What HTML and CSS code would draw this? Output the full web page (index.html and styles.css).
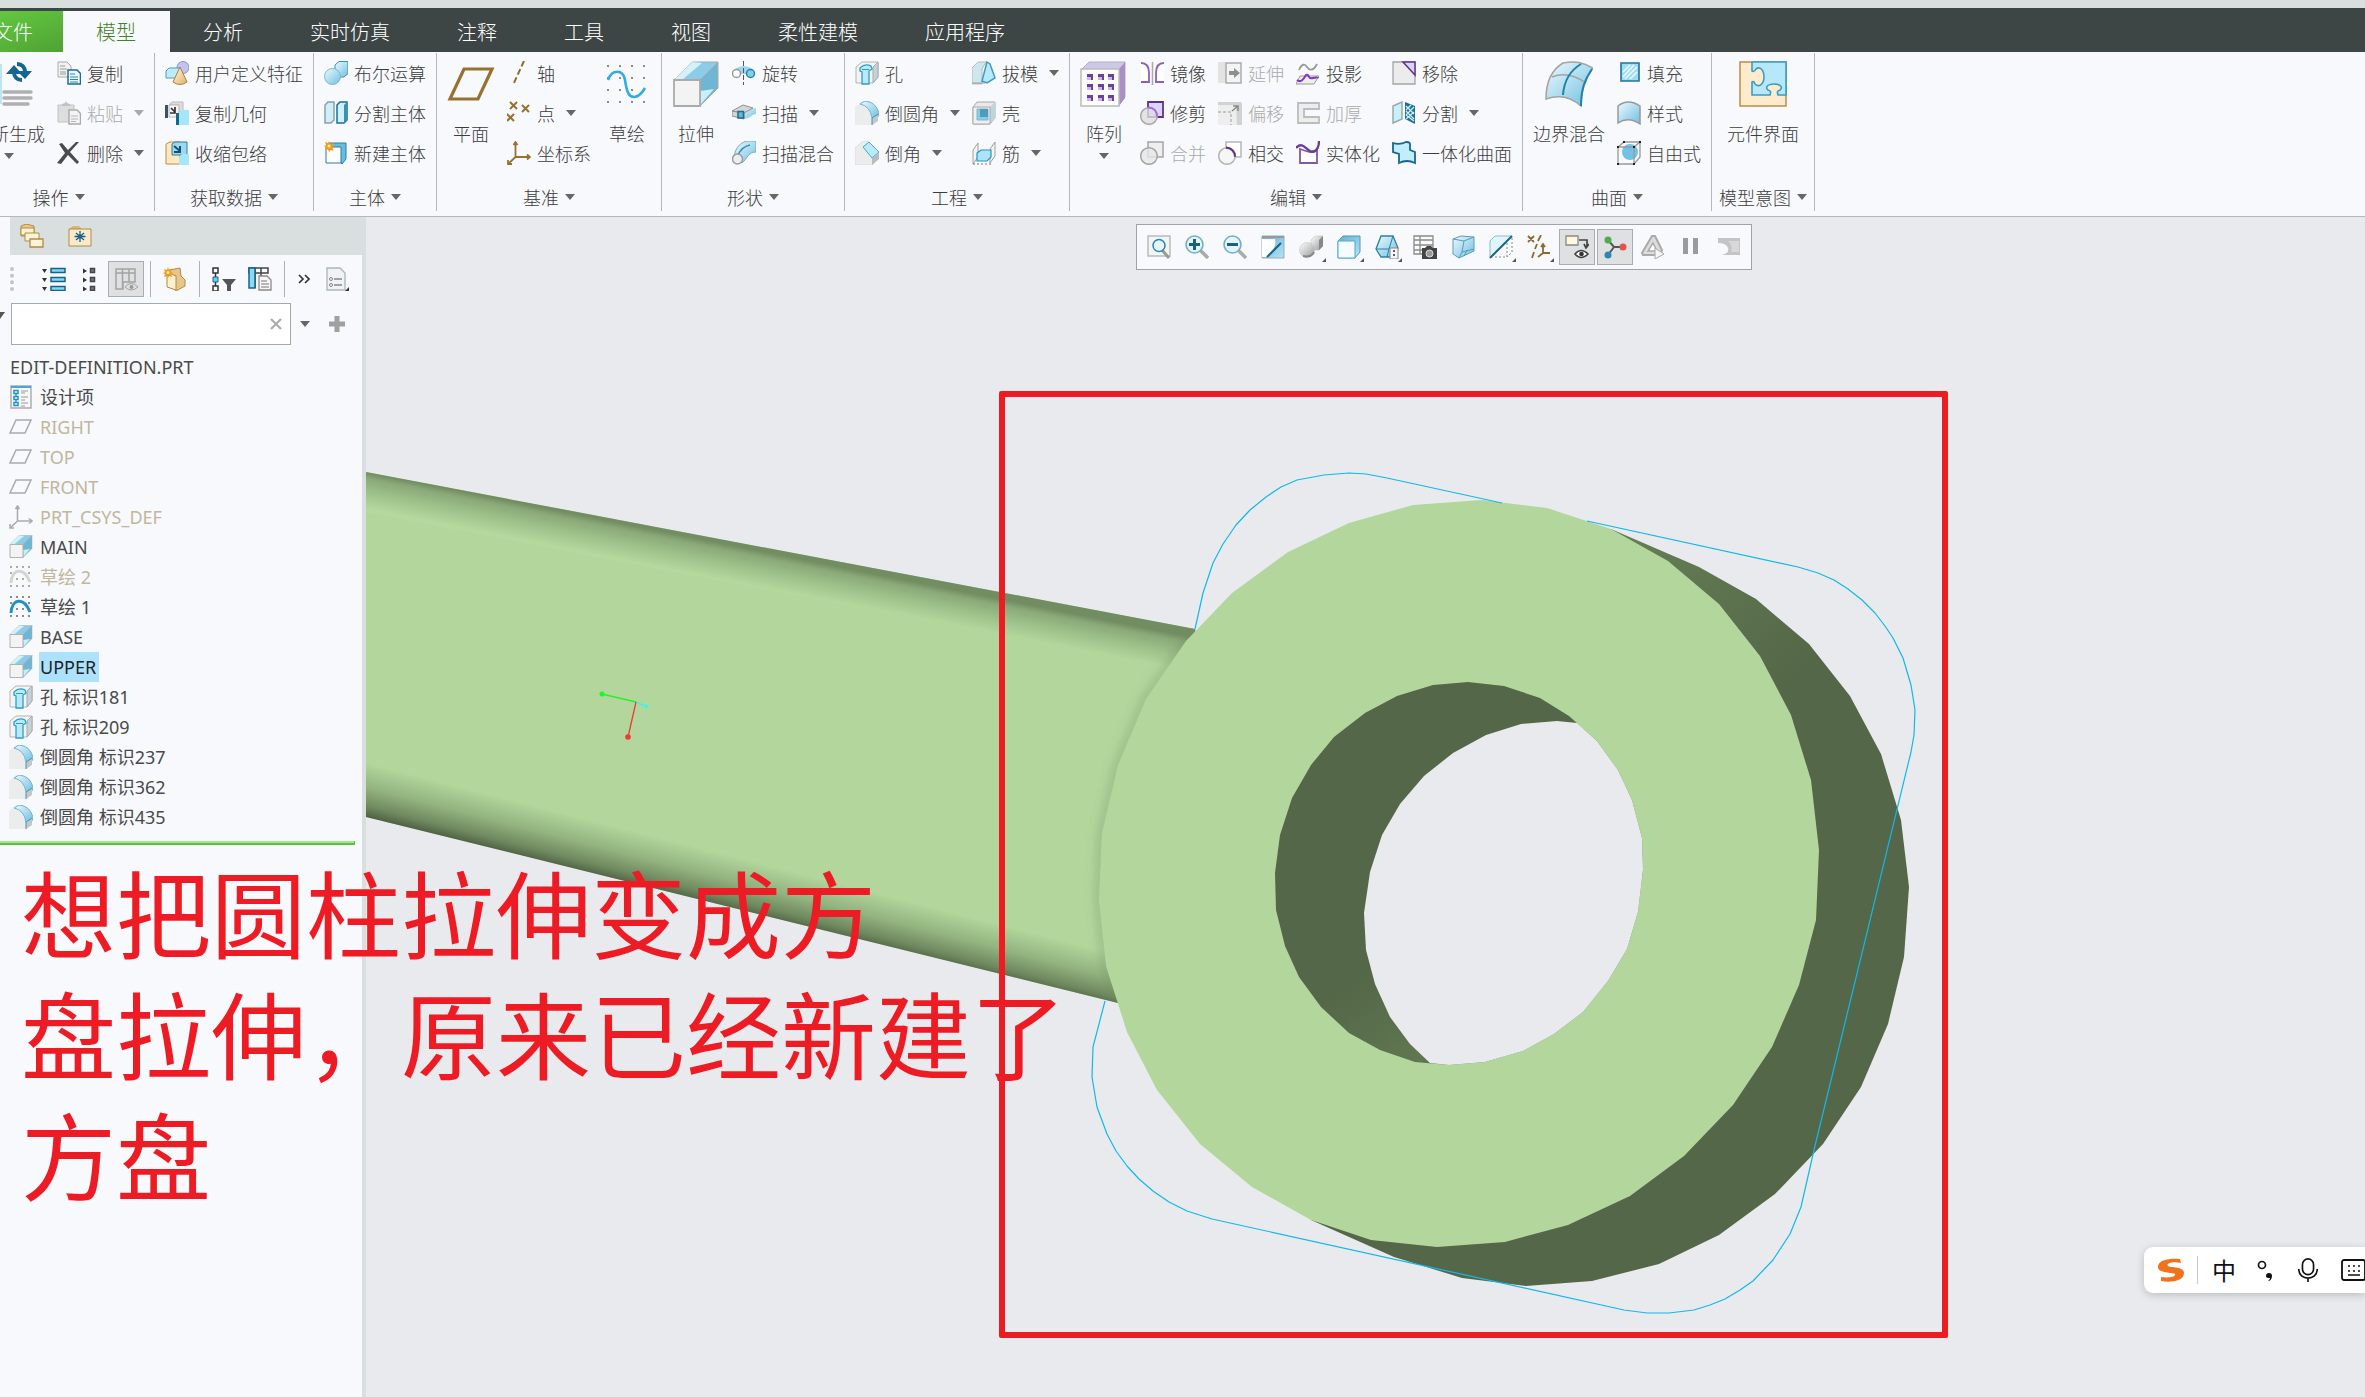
FILE: index.html
```html
<!DOCTYPE html>
<html lang="zh-CN">
<head>
<meta charset="utf-8">
<title>EDIT-DEFINITION.PRT</title>
<link rel="stylesheet" href="styles.css">
</head>
<body>
<svg class="defs" aria-hidden="true">
  <defs>
    <linearGradient id="gb" x1="0" y1="0" x2="1" y2="1"><stop offset="0" stop-color="#eefaff"/><stop offset="1" stop-color="#6fbfe0"/></linearGradient>
    <linearGradient id="gs" x1="0" y1="0" x2="1" y2="1"><stop offset="0" stop-color="#fff"/><stop offset="1" stop-color="#999"/></linearGradient>
    <linearGradient id="gy" x1="0" y1="0" x2="1" y2="1"><stop offset="0" stop-color="#fff8e0"/><stop offset="1" stop-color="#e0b468"/></linearGradient>
    <linearGradient id="gd" x1="0" y1="0" x2="1" y2="1"><stop offset="0" stop-color="#5fb0d4"/><stop offset="1" stop-color="#b5e4f5"/></linearGradient>
  </defs>
  <symbol id="regen" viewBox="0 0 48 48"><path d="M10 3h7v40h-7z" fill="#bfe4f2"/><path d="M29 11c0 5 3 8 8 8M40 11c0-5-3-8-8-8" fill="none" stroke="#15668c" stroke-width="4"/><path d="M21 13l8-9 8 9zM32 10h15l-7 8z" fill="#15668c"/><path d="M19 31h27M19 37h27M19 43h24" stroke="#b0b0b0" stroke-width="3.400" stroke-linecap="round"/></symbol>
  <symbol id="copy" viewBox="0 0 24 24"><path d="M1 1h9l4 4v11H1z" fill="#f1f1f1" stroke="#aaa"/><path d="M3 5h5M3 8h7M3 11h6M3 13h6" stroke="#999"/><path d="M11 9h9l3.500 3.500V23H11z" fill="#eafaff" stroke="#1d6c90" stroke-width="1.500"/><path d="M13 13h5M13 16h8M13 18.500h8M13 21h8" stroke="#2a8ab5"/></symbol>
  <symbol id="paste" viewBox="0 0 24 24"><path d="M1 4h16v17H1z" fill="#ddd" stroke="#c2c2c2"/><path d="M5 5V3l3-1 1-2 1 2 3 1v2z" fill="#c2c2c2"/><path d="M12 9h8l3.500 3.500V23H12z" fill="#f4f4f4" stroke="#aaa" stroke-width="1.500"/><path d="M14 15h7M14 18h7M14 20.500h5" stroke="#b5b5b5"/></symbol>
  <symbol id="del" viewBox="0 0 24 24"><path d="M2 3l3-1 6 7 8-8h3l-9 10 9 10-2 2-9-9-7 9-4-1 8-10z" fill="#4b4b4b"/></symbol>
  <symbol id="udf" viewBox="0 0 24 24"><circle cx="18" cy="6.500" r="6" fill="#c3c3ee" stroke="#8f8fd0"/><path d="M1 10l3-3h11l-2 10H1z" fill="#bfeaf8" stroke="#4aa0c6"/><path d="M15 6l7 15q-7 5-14 0z" fill="url(#gy)" stroke="#a8823f"/></symbol>
  <symbol id="cgeo" viewBox="0 0 24 24"><path d="M0 4h3v13H0z" fill="#3d5261"/><path d="M4 4l3-3h11v10h-4V4z" fill="#ddd" stroke="#bbb"/><path d="M4 4h10v12H4z" fill="#f4f4f4" stroke="#bbb"/><path d="M6 7l4 4m0-5v6H5" stroke="#333" stroke-width="1.700" fill="none"/><path d="M11 12h4v12h-4z" fill="#17678c"/><path d="M14 12l3-3h7v15H14z" fill="#a6e6fb"/></symbol>
  <symbol id="shr" viewBox="0 0 24 24"><path d="M1 3l4-2h10v22H1z" fill="#ffe9bd" stroke="#b58f4c"/><path d="M7 3l3-2h12v13H7z" fill="#9bd9f1" stroke="#2a7ea5"/><path d="M9 5l6 5m0-5v6H9" stroke="#15506f" stroke-width="2" fill="none"/><path d="M14 16l3-3h7v11H14z" fill="#a6e6fb"/></symbol>
  <symbol id="bool" viewBox="0 0 24 24"><path d="M11 4l4-3.500h9v12L20 16h-9z" fill="url(#gb)" stroke="#3a90b8"/><circle cx="8.500" cy="15.500" r="8" fill="url(#gb)" stroke="#7ab8d0"/></symbol>
  <symbol id="splitb" viewBox="0 0 24 24"><path d="M1 4l3-3h6v18l-3 3H1z" fill="#cfeef8" stroke="#8aa0a8" stroke-width="1.500"/><path d="M13 4l3-3h7v18l-3 3h-7z" fill="#cfeffa" stroke="#1b6d93" stroke-width="1.500"/><path d="M20 4l3-3v18l-3 3z" fill="#3a90b8"/></symbol>
  <symbol id="newb" viewBox="0 0 24 24"><path d="M3 6l3-4h16v16l-4 5z" fill="#6cbbdc" stroke="#2a7ea5"/><path d="M2 6h15v16H2z" fill="#fcfeff" stroke="#2a7ea5"/><path d="M5 0l1.500 3 3-1-1 3 2 1-2 1 1 3-3-1L5 11l-1-2.500-3 .5 1-3-2-1 2-1-1-3 3 1z" fill="#f59a1b"/><circle cx="5" cy="5" r="1.500" fill="#fff3b0"/></symbol>
  <symbol id="plane" viewBox="0 0 48 48"><path d="M3 38L17 8h28L31 38z" fill="none" stroke="#96722f" stroke-width="3.200"/></symbol>
  <symbol id="axis" viewBox="0 0 24 24"><path d="M17 0L6 24" stroke="#8c6a2a" stroke-width="2" stroke-dasharray="6 3"/></symbol>
  <symbol id="pts" viewBox="0 0 24 24"><path d="M3 1l7 7M10 1L3 8M15 4l7 7M22 4l-7 7M0 13l7 7M7 13l-7 7" stroke="#96722f" stroke-width="2"/></symbol>
  <symbol id="csys" viewBox="0 0 24 24"><path d="M8.500 1v15H23M8.500 16L1 23M6.500 4l2-3 2 3M20 13.500l3 2.500-3 2.500M1 19v4h4" stroke="#96722f" stroke-width="1.800" fill="none"/></symbol>
  <symbol id="sketch" viewBox="0 0 48 48"><path d="M4 5h2M16 5h2M28 5h2M40 5h2M4 17h2M16 17h2M28 17h2M40 17h2M4 29h2M16 29h2M28 29h2M40 29h2M4 41h2M16 41h2M28 41h2M40 41h2" stroke="#666" stroke-width="1.500"/><path d="M5 19c4-11 15-11 17 0 2 13 4 17 9 17 5 0 8-4 11-9" fill="none" stroke="#33ace0" stroke-width="2.600"/></symbol>
  <symbol id="ext" viewBox="0 0 48 48"><path d="M2 19L20 1h26L28 19z" fill="#8accea" stroke="#aaa"/><path d="M28 19L46 1v26L28 45z" fill="#6fb6d2" stroke="#aaa"/><path d="M28 30l14-2-13 15z" fill="#c9effb"/><path d="M2 19L20 1l10 1-20 17z" fill="#d4f1fa"/><path d="M2 19h26v26H2z" fill="#f3f3f3" stroke="#aaa" stroke-width="1.800"/></symbol>
  <symbol id="rev" viewBox="0 0 24 24"><path d="M3 8q8-6 18 0v5H3z" fill="#9bd6ee"/><circle cx="4.500" cy="12.500" r="4" fill="#fff" stroke="#999" stroke-width="1.500"/><circle cx="18.500" cy="12.500" r="4" fill="#85cdeb" stroke="#2a86b0" stroke-width="1.500"/><path d="M11.500 0v24" stroke="#555" stroke-dasharray="5 2"/></symbol>
  <symbol id="sweep" viewBox="0 0 24 24"><path d="M8 9c6 3 12-3 16-2v6c-4 0-6 5-13 5z" fill="url(#gb)"/><path d="M0 10L11 4l10 3-9 5zM0 10l12 2v6L0 15z" fill="#d5d5d5" stroke="#909090"/><path d="M6 10.500h5.500V17H6z" fill="#6ab6d6" stroke="#1f6d93" stroke-width="1.500"/></symbol>
  <symbol id="swb" viewBox="0 0 24 24"><path d="M2 16C3 6 10 0 17 0h7v11c-8 0-8 6-14 11z" fill="url(#gb)" stroke="#7fa9ba"/><path d="M18 4c-6 1-10 6-12 10" stroke="#3a90b8" stroke-width="1.500" fill="none"/><circle cx="5.500" cy="18" r="5" fill="#eee" stroke="#9d9d9d" stroke-width="1.500"/></symbol>
  <symbol id="hole" viewBox="0 0 24 24"><path d="M1 6l6-5h16v15l-5 6H1z" fill="#f3f3f3" stroke="#b5b5b5"/><path d="M18 6l5-5v15l-5 6z" fill="#c3d3d8" stroke="#aaa"/><path d="M5 7q5-5 11-2l1 3-3 2v13H7V11L5 10z" fill="#b8eafb" stroke="#2e9dcb" stroke-width="1.300"/><path d="M7 8.500h7" stroke="#2e9dcb"/></symbol>
  <symbol id="round" viewBox="0 0 24 24"><path d="M0 6l7-6h7q9 3 10 14l-6 10H0z" fill="#ececec"/><path d="M5 3l5-3q11 1 14 12l-1 4-6 1Q15 5 5 3z" fill="url(#gb)" stroke="#71b6d2"/><path d="M17 17l6-3v6l-6 4z" fill="#c6c6c6"/><path d="M17 24v-7l6-4" stroke="#3c9ac2" fill="none"/></symbol>
  <symbol id="chamf" viewBox="0 0 24 24"><path d="M0 7l8-7h5l11 11v6l-7 7H0z" fill="#ececec" stroke="#ddd"/><path d="M8 6l6-5 10 10-7 6z" fill="#b9ebfb" stroke="#4aa8cd"/><path d="M17 24v-7l7-5v6z" fill="#bbb"/></symbol>
  <symbol id="draft" viewBox="0 0 24 24"><path d="M0 7l6-6h8l-4 7v15H0z" fill="#cfe6ee" stroke="#bbb"/><path d="M15 1l3 2 5 14-8 5-5-2z" fill="#b6eafb" stroke="#3b9cc4" stroke-width="1.500"/><path d="M0 22h13" stroke="#999"/></symbol>
  <symbol id="shell" viewBox="0 0 24 24"><path d="M1 6l4-5h18v16l-5 6H1z" fill="#e9e9e9" stroke="#aaa"/><path d="M18 6l5-5v16l-5 6z" fill="#bdd5dd"/><path d="M1 6h17v17H1z" fill="#efefef" stroke="#aaa"/><path d="M5 8h11v11H5z" fill="#8ccbe3" stroke="#79b9d2"/><path d="M8 8h8v8H8z" fill="#4d9bbf"/></symbol>
  <symbol id="rib" viewBox="0 0 24 24"><path d="M1 9l5-7v14l-5 7zM18 8l5-7v14l-5 7z" fill="#f4f4f4" stroke="#a0a0a0"/><path d="M5 12l4-3h10v7l-4 4H5z" fill="#a9e4f9" stroke="#2a94c1" stroke-width="1.200"/><path d="M1 23h20" stroke="#777" stroke-dasharray="2 2"/></symbol>
  <symbol id="patt" viewBox="0 0 48 48"><path d="M1 9l8-8h36v35l-7 9z" fill="#cdc8e8" stroke="#b5aecb"/><path d="M39 8l6-7v36l-6 8z" fill="#a890c6"/><path d="M1 8h38v37H1z" fill="#fdfdfe" stroke="#bbb" stroke-width="1.500"/><path d="M7 13h6v6H7zM18 13h6v6h-6zM28 13h6v6h-6zM7 23h6v6H7zM18 23h6v6h-6zM28 23h6v6h-6zM7 34h6v6H7zM18 34h6v6h-6zM28 34h6v6h-6z" fill="#6c419c"/><path d="M7 16h4v3H7zM18 16h4v3h-4zM28 16h4v3h-4zM7 26h4v3H7zM18 26h4v3h-4zM28 26h4v3h-4zM7 37h4v3H7zM18 37h4v3h-4zM28 37h4v3h-4z" fill="#cbb9df"/></symbol>
  <symbol id="mirr" viewBox="0 0 24 24"><path d="M1 2c6 0 8 4 8 10v9H1M24 2c-6 0-8 4-8 10v9h8" fill="#fff" stroke="#8d5fb3" stroke-width="1.800"/><path d="M12.500 1v23" stroke="#aaa" stroke-width="1.500"/></symbol>
  <symbol id="trim" viewBox="0 0 24 24"><path d="M8 1h15v15H8z" fill="#dcd3fb" stroke="#5c3588" stroke-width="1.800"/><circle cx="9" cy="15" r="8.300" fill="#dedede" fill-opacity=".8" stroke="#aaa" stroke-width="1.500"/><path d="M8 6.500c6 0 9 4 9 9" stroke="#a36ce0" stroke-width="2" fill="none"/></symbol>
  <symbol id="merge" viewBox="0 0 24 24"><path d="M8 1h15v15H8z" fill="#eee" stroke="#a5a5a5" stroke-width="1.500"/><circle cx="9" cy="15" r="8.300" fill="#e6e6e6" fill-opacity=".8" stroke="#a5a5a5" stroke-width="1.500"/></symbol>
  <symbol id="extend" viewBox="0 0 24 24"><path d="M0 1h8v21H0z" fill="#e3e3e3"/><path d="M8 2h15v20H8z" fill="#f4f4f4" stroke="#aaa" stroke-width="1.500"/><path d="M11 10h5V7l6 5-6 5v-3h-5z" fill="#8f8f8f"/></symbol>
  <symbol id="offs" viewBox="0 0 24 24"><path d="M0 1h22q2 0 2 3v20h-7V8H0z" fill="#d2d2d2"/><path d="M0 4h18l1 20H0z" fill="#eee"/><path d="M0 11h13v13" stroke="#999" stroke-dasharray="3 2" fill="none"/><path d="M14 10l6-5m-5 0h5v5" stroke="#888" stroke-width="1.500" fill="none"/></symbol>
  <symbol id="inter" viewBox="0 0 24 24"><path d="M8 1h15v15H8z" fill="#fff" stroke="#b5b5b5" stroke-width="1.500"/><circle cx="9" cy="15" r="8.300" fill="#f6f6f6" stroke="#b5b5b5" stroke-width="1.500"/><path d="M8 6.700c5 0 9 4 9 9" stroke="#5c3588" stroke-width="2.200" fill="none"/></symbol>
  <symbol id="proj" viewBox="0 0 24 24"><path d="M3 9c3-7 6-6 8-3s6 5 10-3" stroke="#999" stroke-width="1.800" fill="none"/><path d="M4 15h19l-5 8H0z" fill="#eee" stroke="#999"/><path d="M1 19c5 4 8-4 9-5 3-2 2 5 7 3 3-1 5 0 5-1" stroke="#8036cc" stroke-width="2" fill="none"/></symbol>
  <symbol id="thick" viewBox="0 0 24 24"><path d="M2 2h21v6H8v8h15v6H2z" fill="#ededed" stroke="#bcbcbc" stroke-width="1.800"/></symbol>
  <symbol id="solid" viewBox="0 0 24 24"><path d="M4 8v14h17V8q-2 4-7 3T4 8z" fill="#fff" stroke="#8058ab" stroke-width="1.800"/><path d="M0 7c6-7 10 1 14 3 5 2 9-2 9-10" stroke="#6a3d9c" stroke-width="2.400" fill="none"/></symbol>
  <symbol id="rem" viewBox="0 0 24 24"><path d="M1 1h22v22H1z" fill="#ececec" stroke="#a5a5a5" stroke-width="1.300"/><path d="M11 1h12v13z" fill="#dcd3fb" stroke="#5c3588" stroke-width="1.500"/></symbol>
  <symbol id="splits" viewBox="0 0 24 24"><path d="M1 5l9-4v17l-9 4z" fill="#c9effb" stroke="#9aa" stroke-width="1.500"/><path d="M13 1l10 4v18l-10-5z" fill="#1f7098"/><path d="M14 5l8 8M14 10l8 8M14 14l8 6M22 6l-8 8M22 11l-8 7M19 4l-5 5" stroke="#c9effb" stroke-width="1.300"/></symbol>
  <symbol id="quilt" viewBox="0 0 24 24"><path d="M1 2q7 2 13-1 4 0 4 2v6l5 2v11q-8-4-16 0v-9l-6-2z" fill="#c4edfb" stroke="#17678c" stroke-width="1.800"/></symbol>
  <symbol id="bblend" viewBox="0 0 48 48"><path d="M1 38C1 20 8 8 18 2c12-2 20-1 30 5-7 9-12 21-12 38C27 37 15 33 1 38z" fill="url(#gb)" stroke="#a3a3a3" stroke-width="1.500"/><path d="M7 16c12-5 24-1 34 6" stroke="#a3a3a3" fill="none" stroke-width="1.500"/><path d="M36 3C26 9 19 20 18 34M47 8C40 18 36 28 36 45" stroke="#2083ad" stroke-width="2" fill="none"/></symbol>
  <symbol id="fill" viewBox="0 0 24 24"><path d="M4 2h18v18H4z" fill="#9edcf3" stroke="#22739a" stroke-width="1.600"/><path d="M6 11l7-7M6 16L17 4M8 18L20 6M13 18l7-7" stroke="#effbff" stroke-width="1.500"/></symbol>
  <symbol id="style" viewBox="0 0 24 24"><path d="M1 5q10-8 22 0v18q-12-8-22-1z" fill="url(#gb)" stroke="#999" stroke-width="1.500"/></symbol>
  <symbol id="free" viewBox="0 0 24 24"><circle cx="13" cy="11" r="8" fill="#71c2e4"/><path d="M1 6h16v17H1zM1 6l6-5h16v15l-6 7M17 6l6-5" fill="none" stroke="#999" stroke-width="1.300"/><path d="M0 5h2v2H0zM16 5h2v2h-2zM0 22h2v2H0zM16 22h2v2h-2zM6 0h2v2H6zM22 0h2v2h-2z" fill="#222"/></symbol>
  <symbol id="comp" viewBox="0 0 48 48"><path d="M1 1h46v44H1z" fill="#fdebcb" stroke="#b58f4c" stroke-width="1.500"/><path d="M13 1h34v33H39c-1-3-1-4 2-5 3-2 1-6-6-6s-9 4-6 6c3 1 3 2 2 5H13V21c2-1 2 0 3 2 4 4 9 0 9-7s-4-11-8-8c-1 2-2 3-4 2z" fill="#b6e8fa" stroke="#3a9cc6" stroke-width="1.600"/></symbol>

  <symbol id="folders" viewBox="0 0 24 24"><path d="M1 2l5-2 8 2v10H1z" fill="#e9c98b" stroke="#b08a45"/><path d="M1 4h13v7H1z" fill="#fff3d6" stroke="#b08a45"/><path d="M5 9h14v8H5z" fill="#fff3d6" stroke="#b08a45"/><path d="M10 15h13v8H10z" fill="#fff3d6" stroke="#b08a45" stroke-width="1.300"/></symbol>
  <symbol id="favs" viewBox="0 0 24 24"><path d="M1 5l4-3h6l2 2v4H1z" fill="#d8b778"/><path d="M1 5h22v17H1z" fill="#fbeaca" stroke="#b08a45"/><path d="M12 7v11M6.500 12.500h11M8 9l8 7M16 9l-8 7" stroke="#17608a" stroke-width="1.300"/><circle cx="12" cy="12.500" r="2" fill="#17608a"/></symbol>
  <symbol id="expand" viewBox="0 0 24 24"><path d="M0 2h5L2.500 6zM0 11h5l-2.500 4zM0 20h5l-2.500 4z" fill="#333"/><path d="M9 1.500h14v4H9zM9 10.500h14v4H9zM9 19.500h14v4H9z" fill="#85d6f3" stroke="#17628a" stroke-width="1.500"/></symbol>
  <symbol id="collapse" viewBox="0 0 24 24"><path d="M5 1.500v5L9 4zM5 10.500v5L9 13zM5 19.500v5L9 22z" fill="#333"/><path d="M12.500 1.500h4v4h-4zM12.500 10.500h4v4h-4zM12.500 19.500h4v4h-4z" fill="#777" stroke="#444" stroke-width="1.500"/></symbol>
  <symbol id="cols" viewBox="0 0 24 24"><path d="M2 2h19v13H9v7H2zM2 6h19M8.500 2v20M15 2v13" fill="none" stroke="#a3a3a3" stroke-width="1.500"/><path d="M11 20q6-7 13 0-7 6-13 0z" fill="#e0e0e1" stroke="#a3a3a3"/><circle cx="17.500" cy="20" r="2" fill="#999"/></symbol>
  <symbol id="newf" viewBox="0 0 24 24"><path d="M6 3l11-2 1 8 4 4v6l-9 5z" fill="#e6c68c" stroke="#b08a45"/><path d="M4 5l9 4v14l-9-3z" fill="#fff1cf" stroke="#b08a45"/><path d="M5 0l1 3 3-1-1 3 2 1-2 1 1 3-3-1-1 2-1-2-3 1 1-3-2-1 2-1-1-3 3 1z" fill="#f59a1b"/><circle cx="5" cy="5.500" r="1.500" fill="#fff3b0"/></symbol>
  <symbol id="tfilt" viewBox="0 0 24 24"><path d="M1 1h5v5H1zM1 19h5v5H1zM3.500 6v13" fill="none" stroke="#333" stroke-width="1.500"/><path d="M1 10h5v5H1z" fill="#6ccbf0" stroke="#17628a"/><path d="M10 12h14l-5 6v6h-4v-6z" fill="#555"/></symbol>
  <symbol id="tcols" viewBox="0 0 24 24"><path d="M1 1h19v5H1zM7 1v20M13 1v8" fill="none" stroke="#444" stroke-width="1.500"/><path d="M1 1h6v20H1z" fill="#8adaf5" stroke="#17628a" stroke-width="1.500"/><path d="M11 9h8l4 4v10H11z" fill="#f7f7f7" stroke="#8a8a8a" stroke-width="1.300"/><path d="M13 14h6M13 17h8M13 20h8" stroke="#777"/></symbol>
  <symbol id="sett" viewBox="0 0 24 24"><path d="M2 1h13l5 5v17H2z" fill="#f0f3f6" stroke="#a9b5ba" stroke-width="1.300"/><circle cx="6" cy="12" r="1.500" fill="none" stroke="#888"/><circle cx="6" cy="18" r="1.500" fill="none" stroke="#888"/><path d="M9 12h8M9 18h8" stroke="#888" stroke-width="1.300"/><path d="M24 20v4h-4z" fill="#333"/></symbol>
  <symbol id="design" viewBox="0 0 24 24"><path d="M2 1h20v22H2z" fill="#f7f7f7" stroke="#aaa" stroke-width="1.400"/><path d="M2 2h20" stroke="#42a9d6" stroke-width="2"/><path d="M7 5v16" stroke="#2391c7" stroke-width="1.300"/><path d="M5 5.500h4v3H5zM5 11.500h4v3H5zM5 17.500h4v3H5z" fill="#e9f8fe" stroke="#2391c7" stroke-width="1.500"/><path d="M12 6h7M12 8h4M12 12h7M12 15h4M12 18h7M12 21h4" stroke="#999"/></symbol>
  <symbol id="tplane" viewBox="0 0 24 24"><path d="M1 18L7 5h15l-6 13z" fill="none" stroke="#aaa" stroke-width="1.500"/></symbol>
  <symbol id="tcsys" viewBox="0 0 24 24"><path d="M8.500 1v15H23M8.500 16L1 23M6.500 4l2-3 2 3M20 13.500l3 2.500-3 2.500M1 19v4h4" stroke="#aaa" stroke-width="1.500" fill="none"/></symbol>
  <symbol id="tsk" viewBox="0 0 24 24"><path d="M1 2h2M7 2h2M13 2h2M19 2h2M1 8h2M19 8h2M1 14h2M7 14h2M13 14h2M1 21h2M7 21h2M13 21h2M19 21h2" stroke="#8b8b8b" stroke-width="1.800"/><path d="M2 18C3 3 15 2 21 17" stroke="currentColor" stroke-width="3" fill="none"/></symbol>

  <symbol id="vfit" viewBox="0 0 24 24"><path d="M1 1h22v20H1z" fill="#f2f5f6" stroke="#bbb" stroke-width="1.500"/><path d="M15 15l7 8" stroke="#999" stroke-width="3"/><circle cx="12" cy="10.500" r="6" fill="#e6f6fc" stroke="#2a86b0" stroke-width="1.500"/></symbol>
  <symbol id="vin" viewBox="0 0 24 24"><path d="M14 14l9 9" stroke="#aaa" stroke-width="3.500"/><circle cx="9.500" cy="9.500" r="8.500" fill="#e3f4fb" stroke="#73aec6" stroke-width="1.600"/><path d="M9.500 4v11M4 9.500h11" stroke="#175f86" stroke-width="3"/></symbol>
  <symbol id="vout" viewBox="0 0 24 24"><path d="M14 14l9 9" stroke="#aaa" stroke-width="3.500"/><circle cx="9.500" cy="9.500" r="8.500" fill="#e3f4fb" stroke="#73aec6" stroke-width="1.600"/><path d="M4 9.500h11" stroke="#175f86" stroke-width="3"/></symbol>
  <symbol id="vrep" viewBox="0 0 24 24"><path d="M1 1h22v22H1z" fill="url(#gd)" stroke="#9ab"/><path d="M1 2h22" stroke="#999" stroke-width="2"/><path d="M1 4h13q2 8-7 18H1z" fill="#fff"/><path d="M6 22L20 8" stroke="#17628a" stroke-width="2"/></symbol>
  <symbol id="vsty" viewBox="0 0 24 24"><path d="M12 5l4-4h8v10l-4 4h-8z" fill="url(#gs)" stroke="#bbb" stroke-width=".5"/><path d="M20 5l4-4v10l-4 4z" fill="#888"/><circle cx="8" cy="15" r="7.500" fill="url(#gs)" stroke="#bbb" stroke-width=".5"/><path d="M4 21q8 2 11-4" stroke="#888" stroke-width="2" fill="none"/></symbol>
  <symbol id="vbox" viewBox="0 0 24 24"><path d="M1 6l5-5h17v16l-5 6H1z" fill="url(#gd)" stroke="#4d9bbc"/><path d="M1 6h17v17H1z" fill="#f4fcff" stroke="#58a9c9"/></symbol>
  <symbol id="vori" viewBox="0 0 24 24"><path d="M1 14L6 1h12l5 12-4 9H6z" fill="url(#gb)" stroke="#2b80a6" stroke-width="1.300"/><path d="M1 14h13l4-13M14 14l-2 8" stroke="#2b80a6" fill="none"/><path d="M15 13h8v11h-8z" fill="#f5f5f5" stroke="#888"/><path d="M18 16h2M18 20h2" stroke="#333" stroke-width="1.500"/></symbol>
  <symbol id="vcam" viewBox="0 0 24 24"><path d="M1 1h19v18H1zM1 5h19M1 10h19M1 15h12M7 1v18" fill="#fafafa" stroke="#8a8a8a" stroke-width="1.300"/><path d="M9 13h3l2-2h4l2 2h4v11H9z" fill="#444"/><circle cx="16.500" cy="18.500" r="3.500" fill="#999" stroke="#ddd"/></symbol>
  <symbol id="vper" viewBox="0 0 24 24"><path d="M2 4l8-3 13 1v14L8 23l-6-4z" fill="url(#gb)" stroke="#5a9db9"/><path d="M2 4l11 2 10-4M13 6L11 17 8 23M11 17l12-3M16 15l-3 6" fill="none" stroke="#5a9db9"/></symbol>
  <symbol id="vsec" viewBox="0 0 24 24"><path d="M1 6l5-5h17L1 22z" fill="#dff5fc" stroke="#8bbbcf"/><path d="M6 22h12V7M23 3v14l-5 5" stroke="#888" stroke-dasharray="2 2" fill="none"/><path d="M1 23L23 1" stroke="#1b6488" stroke-width="2"/></symbol>
  <symbol id="vdat" viewBox="0 0 24 24"><path d="M1 1l6 6M7 1L1 7M14 0l-3 6M10 9l-2 5M7 17l-2 6M16 10v8h7M16 18l-5 4M14 12l2-3 2 3" stroke="#8c6a2a" stroke-width="1.800" fill="none"/></symbol>
  <symbol id="vann" viewBox="0 0 24 24"><path d="M1 1h12v9H1z" fill="#fff7dc" stroke="#888" stroke-width="1.300"/><path d="M14 5h8v6m-3-2l2 4 3-4" fill="none" stroke="#444" stroke-width="1.700"/><path d="M10 19q6-7 13 0-7 7-13 0z" fill="#fff" stroke="#444" stroke-width="1.600"/><circle cx="16.500" cy="19" r="2.300" fill="#333"/></symbol>
  <symbol id="vspin" viewBox="0 0 24 24"><path d="M5 5l6 7h9M11 12l-6 8" stroke="#555" stroke-width="2" fill="none"/><circle cx="5" cy="5" r="3.500" fill="#55a84d"/><circle cx="20" cy="12" r="3.500" fill="#e0544c"/><circle cx="5" cy="20" r="3.500" fill="#2f86b5"/></symbol>
  <symbol id="vsim" viewBox="0 0 24 24"><path d="M11 1h3l7 14-2 5H2l-1-2z" fill="#ddd" stroke="#aaa" stroke-width="2"/><path d="M12 8l4 8H7z" fill="#fff" stroke="#aaa" stroke-width="1.500"/><path d="M14 13l9 6-9 5z" fill="#f5f5f5" stroke="#aaa"/></symbol>
  <symbol id="vpause" viewBox="0 0 24 24"><path d="M4 3h5v16H4zM14 3h5v16h-5z" fill="#9b9b9b"/></symbol>
  <symbol id="vend" viewBox="0 0 24 24"><path d="M1 3h22v17H5q8-2 6-7-2-5-10-5z" fill="#c4c4c4"/><path d="M11 6h11v11h-8q2-7-3-11z" fill="#d8d8d8"/></symbol>
</svg>

<div class="titlebar"></div>
<nav class="tabs" role="tablist">
  <button class="tab file">文件</button><button class="tab active">模型</button><button class="tab">分析</button><button class="tab">实时仿真</button><button class="tab">注释</button><button class="tab">工具</button><button class="tab">视图</button><button class="tab">柔性建模</button><button class="tab">应用程序</button>
</nav>

<header class="ribbon">
  <section class="group">
    <div class="cmds">
      <button class="big"><svg><use href="#regen"/></svg>重新生成<i class="arrow"></i></button>
      <div class="col">
        <button class="cmd"><svg><use href="#copy"/></svg>复制</button>
        <button class="cmd" disabled><svg><use href="#paste"/></svg>粘贴<i class="arrow"></i></button>
        <button class="cmd"><svg><use href="#del"/></svg>删除<i class="arrow"></i></button>
      </div>
    </div>
    <button class="gname">操作<i class="arrow"></i></button>
  </section>
  <section class="group">
    <div class="cmds"><div class="col">
      <button class="cmd"><svg><use href="#udf"/></svg>用户定义特征</button>
      <button class="cmd"><svg><use href="#cgeo"/></svg>复制几何</button>
      <button class="cmd"><svg><use href="#shr"/></svg>收缩包络</button>
    </div></div>
    <button class="gname">获取数据<i class="arrow"></i></button>
  </section>
  <section class="group">
    <div class="cmds"><div class="col">
      <button class="cmd"><svg><use href="#bool"/></svg>布尔运算</button>
      <button class="cmd"><svg><use href="#splitb"/></svg>分割主体</button>
      <button class="cmd"><svg><use href="#newb"/></svg>新建主体</button>
    </div></div>
    <button class="gname">主体<i class="arrow"></i></button>
  </section>
  <section class="group">
    <div class="cmds">
      <button class="big"><svg><use href="#plane"/></svg>平面</button>
      <div class="col">
        <button class="cmd"><svg><use href="#axis"/></svg>轴</button>
        <button class="cmd"><svg><use href="#pts"/></svg>点<i class="arrow"></i></button>
        <button class="cmd"><svg><use href="#csys"/></svg>坐标系</button>
      </div>
      <button class="big"><svg><use href="#sketch"/></svg>草绘</button>
    </div>
    <button class="gname">基准<i class="arrow"></i></button>
  </section>
  <section class="group">
    <div class="cmds">
      <button class="big"><svg><use href="#ext"/></svg>拉伸</button>
      <div class="col">
        <button class="cmd"><svg><use href="#rev"/></svg>旋转</button>
        <button class="cmd"><svg><use href="#sweep"/></svg>扫描<i class="arrow"></i></button>
        <button class="cmd"><svg><use href="#swb"/></svg>扫描混合</button>
      </div>
    </div>
    <button class="gname">形状<i class="arrow"></i></button>
  </section>
  <section class="group">
    <div class="cmds">
      <div class="col">
        <button class="cmd"><svg><use href="#hole"/></svg>孔</button>
        <button class="cmd"><svg><use href="#round"/></svg>倒圆角<i class="arrow"></i></button>
        <button class="cmd"><svg><use href="#chamf"/></svg>倒角<i class="arrow"></i></button>
      </div>
      <div class="col">
        <button class="cmd"><svg><use href="#draft"/></svg>拔模<i class="arrow"></i></button>
        <button class="cmd"><svg><use href="#shell"/></svg>壳</button>
        <button class="cmd"><svg><use href="#rib"/></svg>筋<i class="arrow"></i></button>
      </div>
    </div>
    <button class="gname">工程<i class="arrow"></i></button>
  </section>
  <section class="group">
    <div class="cmds">
      <button class="big"><svg><use href="#patt"/></svg>阵列<i class="arrow"></i></button>
      <div class="col">
        <button class="cmd"><svg><use href="#mirr"/></svg>镜像</button>
        <button class="cmd"><svg><use href="#trim"/></svg>修剪</button>
        <button class="cmd" disabled><svg><use href="#merge"/></svg>合并</button>
      </div>
      <div class="col">
        <button class="cmd" disabled><svg><use href="#extend"/></svg>延伸</button>
        <button class="cmd" disabled><svg><use href="#offs"/></svg>偏移</button>
        <button class="cmd"><svg><use href="#inter"/></svg>相交</button>
      </div>
      <div class="col">
        <button class="cmd"><svg><use href="#proj"/></svg>投影</button>
        <button class="cmd" disabled><svg><use href="#thick"/></svg>加厚</button>
        <button class="cmd"><svg><use href="#solid"/></svg>实体化</button>
      </div>
      <div class="col">
        <button class="cmd"><svg><use href="#rem"/></svg>移除</button>
        <button class="cmd"><svg><use href="#splits"/></svg>分割<i class="arrow"></i></button>
        <button class="cmd"><svg><use href="#quilt"/></svg>一体化曲面</button>
      </div>
    </div>
    <button class="gname">编辑<i class="arrow"></i></button>
  </section>
  <section class="group">
    <div class="cmds">
      <button class="big"><svg><use href="#bblend"/></svg>边界混合</button>
      <div class="col">
        <button class="cmd"><svg><use href="#fill"/></svg>填充</button>
        <button class="cmd"><svg><use href="#style"/></svg>样式</button>
        <button class="cmd"><svg><use href="#free"/></svg>自由式</button>
      </div>
    </div>
    <button class="gname">曲面<i class="arrow"></i></button>
  </section>
  <section class="group">
    <div class="cmds">
      <button class="big"><svg><use href="#comp"/></svg>元件界面</button>
    </div>
    <button class="gname">模型意图<i class="arrow"></i></button>
  </section>
</header>

<main class="work">
  <aside class="side">
    <div class="sidetabs">
      <button aria-label="文件夹浏览器"><svg><use href="#folders"/></svg></button>
      <button aria-label="收藏夹"><svg><use href="#favs"/></svg></button>
    </div>
    <div class="panel">
      <div class="treebar">
        <span class="grip"></span>
        <button aria-label="展开"><svg><use href="#expand"/></svg></button>
        <button aria-label="折叠"><svg><use href="#collapse"/></svg></button>
        <button class="on" aria-label="树列"><svg><use href="#cols"/></svg></button>
        <span class="bar"></span>
        <button aria-label="新建"><svg><use href="#newf"/></svg></button>
        <span class="bar"></span>
        <button aria-label="过滤器"><svg><use href="#tfilt"/></svg></button>
        <button aria-label="列设置"><svg><use href="#tcols"/></svg></button>
        <span class="bar"></span>
        <button class="more" aria-label="更多"><svg viewBox="0 0 14 12"><path d="M1 2l4 4-4 4M7 2l4 4-4 4" fill="none" stroke="#333" stroke-width="1.700"/></svg></button>
        <button aria-label="设置"><svg><use href="#sett"/></svg></button>
      </div>
      <div class="search">
        <svg class="funnel" viewBox="0 0 6 10"><path d="M0 0h5L0 7z" fill="#555"/></svg>
        <div class="field">
          <input type="text" aria-label="搜索模型树">
          <button aria-label="清除"><svg viewBox="0 0 12 12"><path d="M1 1l10 10M11 1L1 11" stroke="#aaa" stroke-width="2"/></svg></button>
        </div>
        <button class="drop" aria-label="搜索选项"><i class="arrow"></i></button>
        <button class="add" aria-label="添加"><svg viewBox="0 0 18 18"><path d="M9 1v16M1 9h16" stroke="#a0a0a0" stroke-width="5"/></svg></button>
      </div>
      <ul class="tree">
        <li class="root">EDIT-DEFINITION.PRT</li>
        <li><svg><use href="#design"/></svg><span>设计项</span></li>
        <li class="dim"><svg><use href="#tplane"/></svg><span>RIGHT</span></li>
        <li class="dim"><svg><use href="#tplane"/></svg><span>TOP</span></li>
        <li class="dim"><svg><use href="#tplane"/></svg><span>FRONT</span></li>
        <li class="dim"><svg><use href="#tcsys"/></svg><span>PRT_CSYS_DEF</span></li>
        <li><svg><use href="#ext"/></svg><span>MAIN</span></li>
        <li class="dim"><svg class="off"><use href="#tsk"/></svg><span>草绘 2</span></li>
        <li><svg class="sk"><use href="#tsk"/></svg><span>草绘 1</span></li>
        <li><svg><use href="#ext"/></svg><span>BASE</span></li>
        <li class="sel"><svg><use href="#ext"/></svg><span>UPPER</span></li>
        <li><svg><use href="#hole"/></svg><span>孔 标识181</span></li>
        <li><svg><use href="#hole"/></svg><span>孔 标识209</span></li>
        <li><svg><use href="#round"/></svg><span>倒圆角 标识237</span></li>
        <li><svg><use href="#round"/></svg><span>倒圆角 标识362</span></li>
        <li><svg><use href="#round"/></svg><span>倒圆角 标识435</span></li>
      </ul>
      <div class="insert"></div>
    </div>
  </aside>

  <div class="view">
    <svg class="scene" viewBox="366 217 1999 1180" preserveAspectRatio="xMinYMin slice">
      <defs>
        <linearGradient id="top" gradientUnits="userSpaceOnUse" x1="366" y1="472" x2="358" y2="512"><stop offset="0" stop-color="#728d61"/><stop offset=".15" stop-color="#8aa978"/><stop offset=".5" stop-color="#9fc28b"/><stop offset=".9" stop-color="#b5da9f"/><stop offset="1" stop-color="#b2d69c"/></linearGradient>
        <linearGradient id="bot" gradientUnits="userSpaceOnUse" x1="366" y1="817" x2="379" y2="766"><stop offset="0" stop-color="#4e6044"/><stop offset=".2" stop-color="#6f895f"/><stop offset=".55" stop-color="#93b37f"/><stop offset="1" stop-color="#b2d69c"/></linearGradient>
        <linearGradient id="rim" gradientUnits="userSpaceOnUse" x1="1640" y1="540" x2="1800" y2="680"><stop offset="0" stop-color="#647d55"/><stop offset="1" stop-color="#546748"/></linearGradient>
        <linearGradient id="bore" gradientUnits="userSpaceOnUse" x1="1350" y1="980" x2="1410" y2="1065"><stop offset="0" stop-color="#546748"/><stop offset="1" stop-color="#5f7751"/></linearGradient>
        <clipPath id="arm"><path d="M366 472L1195 629 1300 800 1118 1003 366 817z"/></clipPath>
        <filter id="soft" x="-50%" width="200%"><feGaussianBlur stdDeviation="5"/></filter>
      </defs>
      <path d="M366 472L1195 629 1300 800 1118 1003 366 817z" fill="#b2d69c"/>
      <path d="M366 472L1195 629 1195 671 366 513z" fill="url(#top)"/>
      <path d="M366 817L1118 1003 1118 948 366 763z" fill="url(#bot)"/>
      <g clip-path="url(#arm)"><path d="M1195 629L1146 699 1118 765 1102 833 1099 900 1106 966 1118 1010" fill="none" stroke="#6c865c" stroke-opacity=".3" stroke-width="10" filter="url(#soft)"/></g>
      <path d="M1611 529L1699 567 1756 599 1809 644 1850 696 1881 754 1901 820 1909 887 1904 957 1888 1024 1861 1087 1823 1144 1775 1194 1719 1235 1659 1264 1592 1281 1526 1286 1462 1278 1394 1257 1311 1220z" fill="url(#rim)"/>
      <path d="M1482 500L1547 508 1611 529 1668 561 1719 604 1760 656 1791 715 1811 780 1819 850 1816 920 1799 985 1772 1047 1733 1105 1684 1156 1630 1196 1568 1225 1505 1242 1437 1247 1371 1240 1311 1220 1252 1187 1200 1144 1157 1090 1127 1032 1106 966 1099 900 1102 833 1118 765 1146 699 1186 641 1232 593 1288 552 1349 523 1413 505z" fill="#b2d69c"/>
      <path d="M1468 682L1504 686 1540 698 1569 716 1597 741 1618 770 1632 800 1642 838 1643 870 1638 912 1627 949 1608 981 1583 1012 1554 1034 1523 1051 1485 1062 1449 1065 1415 1062 1380 1050 1349 1033 1321 1007 1299 977 1285 946 1276 910 1275 873 1280 835 1292 798 1311 765 1334 737 1365 713 1397 696 1433 685z" fill="url(#bore)"/>
      <path d="M1577 723L1557 721 1521 724 1486 735 1453 753 1424 776 1400 804 1382 835 1370 872 1364 913 1366 950 1375 984 1390 1017 1410 1044 1430 1063 1449 1065 1485 1062 1523 1051 1554 1034 1583 1012 1608 981 1627 949 1638 912 1643 870 1642 838 1632 800 1618 770 1597 741z" fill="#e8eaee"/>
      <path d="M1195 629L1203 593 1213 563 1223 544 1236 525 1250 510 1266 497 1281 487 1297 480 1324 475 1349 473 1366 474 1387 478 1502 503M1587 521L1798 567 1818 573 1834 580 1848 589 1862 600 1875 613 1885 626 1893 638 1903 658 1911 685 1915 710 1914 735 1911 752 1814 1150 1801 1207 1790 1234 1773 1260 1753 1281 1740 1290 1725 1299 1710 1305 1694 1310 1669 1313 1647 1313 1624 1310 1212 1219 1187 1211 1169 1202 1153 1191 1139 1179 1127 1166 1116 1151 1107 1134 1097 1107 1092 1077 1093 1047 1105 1001" fill="none" stroke="#12b8ea" stroke-width="1.200" stroke-linejoin="round"/>
      <path d="M602 694L636 702" stroke="#2af02a" stroke-width="1.500"/><circle cx="602" cy="694" r="2.500" fill="#2af02a"/>
      <path d="M636 702L647 707" stroke="#40f0f0" stroke-width="1.500"/><path d="M645 704l4 2-3 3z" fill="#40f0f0"/>
      <path d="M636 702L628 737" stroke="#f03a3a" stroke-width="1.300"/><circle cx="628" cy="737" r="2.800" fill="#f03a3a"/>
    </svg>
    <div class="viewbar">
      <button aria-label="重新调整"><svg><use href="#vfit"/></svg></button>
      <button aria-label="放大"><svg><use href="#vin"/></svg></button>
      <button aria-label="缩小"><svg><use href="#vout"/></svg></button>
      <button aria-label="重画"><svg><use href="#vrep"/></svg></button>
      <button class="menu" aria-label="渲染"><svg><use href="#vsty"/></svg></button>
      <button class="menu" aria-label="显示样式"><svg><use href="#vbox"/></svg></button>
      <button class="menu" aria-label="已保存方向"><svg><use href="#vori"/></svg></button>
      <button aria-label="视图管理器"><svg><use href="#vcam"/></svg></button>
      <button aria-label="透视图"><svg><use href="#vper"/></svg></button>
      <button class="menu" aria-label="截面"><svg><use href="#vsec"/></svg></button>
      <button class="menu" aria-label="基准显示"><svg><use href="#vdat"/></svg></button>
      <button class="on" aria-label="注释显示"><svg><use href="#vann"/></svg></button>
      <button class="on" aria-label="旋转中心"><svg><use href="#vspin"/></svg></button>
      <button aria-label="仿真"><svg><use href="#vsim"/></svg></button>
      <button aria-label="暂停"><svg><use href="#vpause"/></svg></button>
      <button aria-label="结束"><svg><use href="#vend"/></svg></button>
    </div>
  </div>
</main>

<div class="frame"></div>
<p class="note">想把圆柱拉伸变成方<br>盘拉伸，原来已经新建了<br>方盘</p>

<div class="ime">
  <svg class="logo" viewBox="0 0 28 26"><path d="M23 2L24 6C14 4 9 7 11 9 13 11 27 9 27 16 27 24 14 26 4 24L4 20C12 21 19 20 18 17 17 15 1 17 1 10 1 2 15 1 23 2z" fill="#f0731c"/></svg>
  <span class="sep"></span>
  <button class="zh">中</button>
  <button aria-label="标点"><svg viewBox="0 0 24 24"><circle cx="8" cy="7" r="3.500" fill="none" stroke="#111" stroke-width="1.700"/><path d="M12 18a3 3 0 1 1 6 0c0 3-2 5-4 5 1-1 2-2 2-3-2 0-4 0-4-2z" fill="#111"/></svg></button>
  <button aria-label="语音"><svg viewBox="0 0 24 26"><rect x="6" y="1" width="12" height="17" rx="6" fill="none" stroke="#111" stroke-width="1.800"/><path d="M2 12c0 13 20 13 20 0M12 21v5" fill="none" stroke="#111" stroke-width="1.800"/></svg></button>
  <button class="kbd" aria-label="键盘"><svg viewBox="0 0 24 24"><rect x="1" y="2" width="23" height="20" rx="2" fill="none" stroke="#111" stroke-width="1.800"/><path d="M7 8h2M12 8h2M17 8h2M7 13h2M12 13h2M17 13h2M7 17h12" stroke="#111" stroke-width="1.600"/></svg></button>
</div>
</body>
</html>
```
FILE: styles.css
```css
* { box-sizing: border-box; }

body {
  margin: 0;
  min-height: 100vh;
  display: flex;
  flex-direction: column;
  position: relative;
  overflow: hidden;
  background: #e8eaee;
  color: #3c3c3c;
  font: 300 18px/24px "Noto Sans CJK SC", sans-serif;
}

button {
  padding: 0;
  border: 0;
  background: none;
  color: inherit;
  font: inherit;
  white-space: nowrap;
}

svg { display: block; flex: none; width: 24px; height: 24px; }
.defs { position: absolute; width: 0; height: 0; }

.arrow {
  width: 0;
  height: 0;
  border: 5px solid transparent;
  border-top: 6px solid #666;
  border-bottom: 0;
}

/* title strip and tabs */
.titlebar { height: 8px; background: #d9dfde; }

.tabs {
  display: flex;
  height: 44px;
  padding-top: 3px;
  margin-left: -37px;
  background: #3d4545;
}
.tab { padding: 0 34px 0 33px; color: #fff; font-size: 20px; }
.tab.file { padding: 0 30px; background: linear-gradient(160deg, #66d043, #4fa234); }
.tab.active { background: #f8f9fc; color: #438225; }

/* ribbon */
.ribbon {
  display: flex;
  padding: 1px 0 5px;
  margin-left: -37px;
  background: #f8f9fc;
  border-bottom: 1px solid #aebabd;
}
.group {
  display: flex;
  flex-direction: column;
  justify-content: space-between;
  height: 158px;
  border-right: 1px solid #b4babc;
}
.cmds { display: flex; justify-content: center; gap: 12px; padding: 0 10px; }
.col { display: flex; flex-direction: column; }
.cmd { display: flex; align-items: center; gap: 6px; height: 40px; }
.cmd .arrow { margin-left: 5px; }
.cmd:disabled { color: #aaa; }
.cmd:disabled .arrow { border-top-color: #aaa; }
.big {
  display: flex;
  flex-direction: column;
  align-items: center;
  min-width: 48px;
  padding-top: 8px;
}
.big svg { width: 48px; height: 48px; margin-bottom: 12px; }
.big .arrow { margin-top: 8px; }
.gname {
  display: flex;
  align-items: center;
  justify-content: center;
  gap: 6px;
  height: 28px;
  padding: 0 7px;
}

/* work area */
.work { display: flex; flex: 1; }
.side {
  flex: none;
  width: 366px;
  padding-left: 10px;
  background: #d9dfdf;
  box-shadow: inset 10px 0 #f8f9fc;
}
.sidetabs { display: flex; align-items: center; gap: 24px; height: 38px; padding-left: 10px; }
.panel {
  height: calc(100% - 38px);
  margin: 0 4px 0 -10px;
  background: #f8f9fc;
}
.treebar { display: flex; align-items: center; height: 48px; padding-left: 10px; }
.treebar button,
.viewbar button {
  display: flex;
  align-items: center;
  justify-content: center;
  width: 36px;
  height: 36px;
}
.treebar .on, .viewbar .on { background: #dfe0e2; border: 1px solid #a9adaf; }
.treebar .more { width: 28px; }
.more svg { width: 14px; height: 12px; }
.grip { width: 4px; margin-right: 22px; height: 24px; border-left: 4px dotted #c2c5c6; }
.bar { width: 1px; height: 36px; margin: 0 6px; background: #aeb2b4; }

.search { display: flex; align-items: center; }
.funnel { width: 6px; height: 10px; margin: -14px 5px 0 0; }
.field {
  display: flex;
  align-items: center;
  width: 280px;
  height: 42px;
  padding-right: 8px;
  background: #fff;
  border: 1px solid #9fabad;
}
.field input { flex: 1; min-width: 0; border: 0; outline: 0; background: none; font: inherit; }
.field svg { width: 12px; height: 12px; }
.drop { margin: 0 18px 0 9px; }
.drop .arrow { display: block; }
.add svg { width: 18px; height: 18px; }

.tree {
  margin: 7px 0 0;
  padding: 0 0 0 9px;
  list-style: none;
  font-family: "Noto Sans", "Noto Sans CJK SC", sans-serif;
  font-weight: 400;
  line-height: 30px;
  color: #4a4a4a;
}
.tree li { display: flex; align-items: center; gap: 6px; height: 30px; }
.tree .root { padding-left: 1px; }
.tree span { padding: 0 3px 0 1px; }
.tree .dim { color: #c0b79c; }
.sel span { background: #ade2ff; color: #222; }
.sk { color: #2391c7; }
.off { color: #c8c5bb; opacity: .7; }
.insert {
  height: 4px;
  margin: 9px 7px 0 0;
  background: linear-gradient(#a9e394 50%, #5bc436 50%);
  border-right: 1px solid #5bc436;
}

.view { position: relative; flex: 1; min-width: 0; }
.scene { position: absolute; inset: 0; width: 100%; height: 100%; }
.viewbar {
  position: absolute;
  top: 7px;
  left: 770px;
  display: flex;
  gap: 2px;
  padding: 4px;
  background: #f8f9fc;
  border: 1px solid #9fa4a6;
}
.viewbar .menu { position: relative; }
.menu::after {
  content: "";
  position: absolute;
  right: 3px;
  bottom: 3px;
  border: 2px solid #555;
  border-top-color: transparent;
  border-left-color: transparent;
}

/* annotations over the window */
.frame {
  position: absolute;
  left: 999px;
  top: 391px;
  width: 949px;
  height: 947px;
  border: 6px solid #ed1c24;
  border-radius: 2px;
  pointer-events: none;
}
.note {
  position: absolute;
  left: 21px;
  top: 850px;
  margin: 0;
  color: #ed1c24;
  font-size: 95px;
  font-weight: 400;
  line-height: 121px;
  white-space: nowrap;
}

/* input-method bar */
.ime {
  position: absolute;
  right: 0;
  bottom: 104px;
  display: flex;
  align-items: center;
  gap: 18px;
  height: 46px;
  padding-left: 13px;
  background: #fff;
  border-radius: 9px 0 0 9px;
  box-shadow: 0 2px 8px rgba(0, 0, 0, .2);
}
.ime .logo { width: 28px; height: 26px; margin-right: -6px; }
.sep { width: 1px; height: 28px; margin-right: -4px; background: #ccc; }
.zh { color: #111; font-size: 24px; font-weight: 400; }
.kbd { margin-left: 3px; }
```
